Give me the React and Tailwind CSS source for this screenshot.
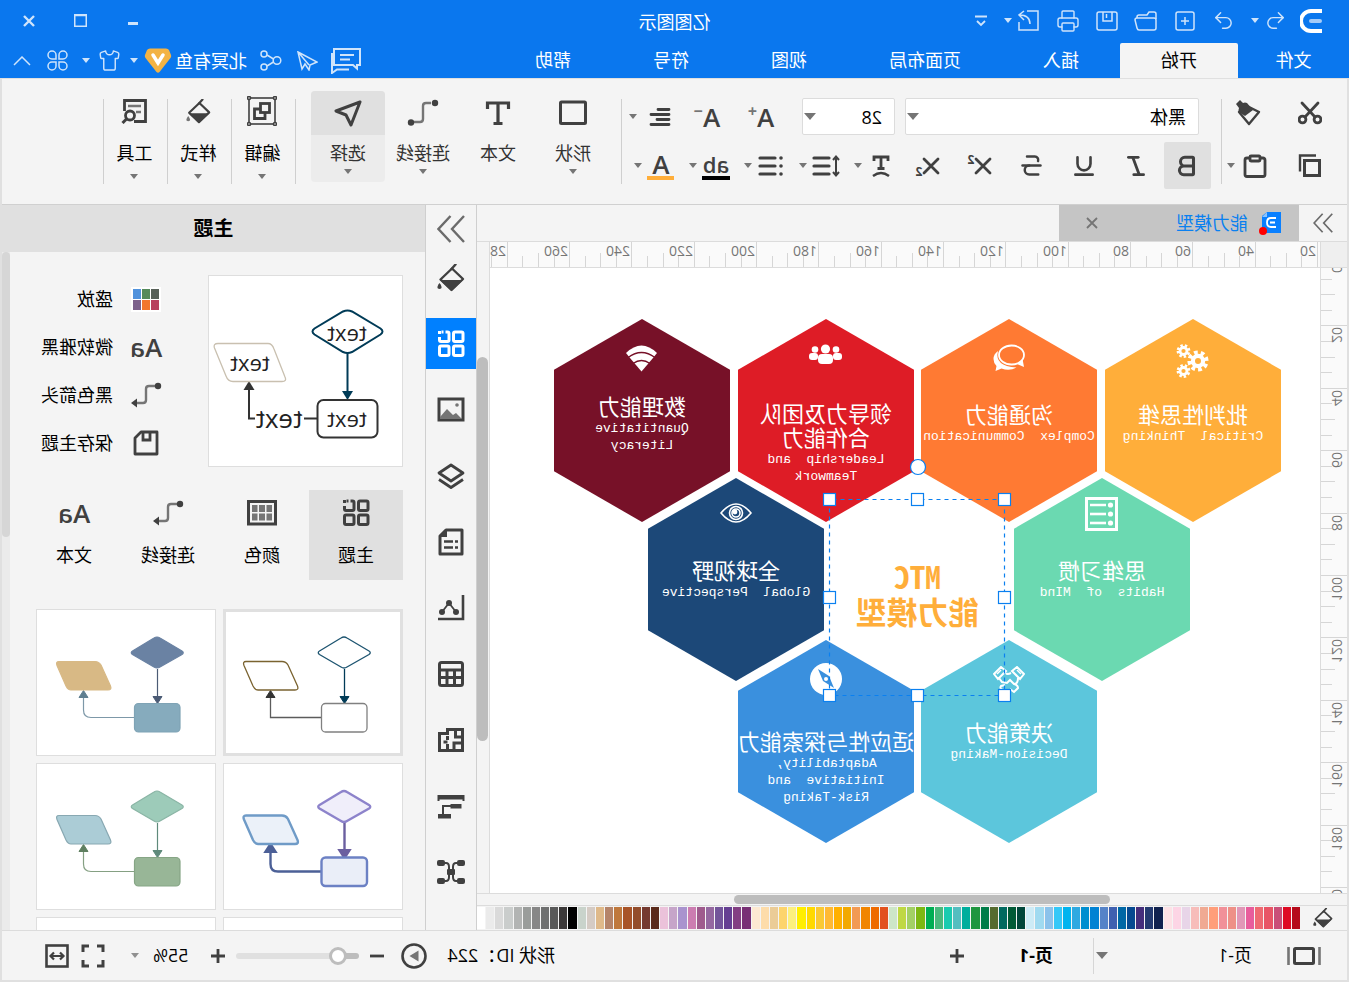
import { useState } from 'react'
import { Bold, Italic, Underline, Strikethrough, Undo2, Redo2, Printer, Shirt } from 'lucide-react'

const SWATCHES = [
  '#b50a1b', '#de0a24', '#c94f78', '#e85566', '#ef6a72', '#e85d9c', '#e197b7', '#ee9087', '#f19099', '#ff9e7a',
  '#f0aa93', '#f7bdba', '#e8d5e8', '#fdd5e5', '#fde2e6', '#11224f', '#243a70', '#452e7c', '#064990', '#0067a5',
  '#3f60b0', '#5583c8', '#0082d3', '#008ecf', '#2fa9e1', '#00b4ef', '#35c8f8', '#8bc2eb', '#a0daf0', '#cdebf6',
  '#00463a', '#005a36', '#00695f', '#556b2f', '#007c48', '#1f9640', '#00ae9d', '#54bec0', '#1acbb0', '#49b97d',
  '#00ae54', '#7db813', '#a3d065', '#bfd844', '#cde6c8', '#e2511f', '#ee6a00', '#f18500', '#f29a54', '#f2a900',
  '#ffb000', '#ffb934', '#fac933', '#ffd900', '#ffee00', '#fcf07e', '#fdd46c', '#ebcc97', '#fddcaa', '#fde9d2',
  '#783075', '#833f83', '#653f92', '#73559a', '#9568a0', '#9f5b8d', '#cc7db1', '#a993ce', '#c6a5c9', '#ebc2da',
  '#5a2a1a', '#753a30', '#934d2b', '#a85428', '#bf783d', '#b5846a', '#dfb98a', '#d5cbc4', '#c9d3cb', '#000000',
  '#3b3838', '#595959', '#6f7070', '#878787', '#9a9d9b', '#b2b4b3', '#cacdcc', '#dadada', '#ebebeb', '#ffffff',
]

const DARK = '#404040'

// ── Small shared bits ─────────────────────────────────────────────────────────
function Caret({ className = 'text-[#757575]', big }) {
  return (
    <svg width={big ? 12 : 8} height={big ? 7 : 5} viewBox="0 0 8 5" preserveAspectRatio="none" className={`shrink-0 ${className}`}>
      <path d="M0 0h8L4 5z" fill="currentColor" />
    </svg>
  )
}

function Ico({ w = 28, h = 28, box, children, sw = 2.4, color = DARK }) {
  return (
    <svg width={w} height={h} viewBox={box || `0 0 ${w} ${h}`} fill="none" stroke={color} strokeWidth={sw} className="shrink-0">
      {children}
    </svg>
  )
}

function IconButton({ label, className = 'w-6', children }) {
  return (
    <button aria-label={label} className={`flex h-6 shrink-0 items-center justify-center ${className}`}>
      {children}
    </button>
  )
}

// ── Icons ─────────────────────────────────────────────────────────────────────
function Bucket({ size = 28, drop = DARK }) {
  return (
    <Ico w={size} h={size} box="0 0 28 28">
      <path d="M9.5 0.5l4 4.5" strokeLinecap="round" />
      <path d="M13 4.5 24.5 15.5 13.5 26 2 15z" strokeLinejoin="round" />
      <path d="M2 16h23L13.5 27z" fill={DARK} stroke="none" />
      <path d="M25.5 19c3 4 2.5 6 0 6s-3-2 0-6z" fill={drop} stroke="none" />
    </Ico>
  )
}

function GridFour({ color = DARK, size = 28 }) {
  return (
    <Ico w={size} h={size} box="0 0 28 28" color={color} sw={3}>
      <rect x="2" y="2" width="9.5" height="9.5" rx="1.5" />
      <rect x="2" y="16" width="9.5" height="9.5" rx="1.5" />
      <rect x="16" y="16" width="9.5" height="9.5" rx="1.5" />
      <path d="M19.5 2h-2q-1.500 0-1.500 1.500V10q0 1.500 1.500 1.500H24q1.500 0 1.500-1.500V7M21.5 2h2M25.5 1v3" />
    </Ico>
  )
}

function Connector({ arrow }) {
  return (
    <Ico w={32} h={28} color="#757575" sw={2.4}>
      <path d={arrow ? 'M7 5h6q3 0 3 3v11q0 3 3 3h6' : 'M8 4h5q3 0 3 3v13q0 3 3 3h6'} />
      <circle cx="4" cy={arrow ? 5 : 4} r="3.200" fill={DARK} stroke="none" />
      {arrow
        ? <path d="M25 17.5v9l6-4.500z" fill={DARK} stroke="none" />
        : <circle cx="28" cy="23.500" r="3.200" fill={DARK} stroke="none" />}
    </Ico>
  )
}

function Chevrons({ w = 20, h = 20 }) {
  return (
    <Ico w={w} h={h} box="0 0 28 28" color="#6b6b6b" sw={2.4}>
      <path d="M1 1l12 13L1 27M14.5 1l12 13-12 13" />
    </Ico>
  )
}

function Lines({ bullets, spacing, x = 0 }) {
  return (
    <Ico w={28} h={24} sw={3.2}>
      {spacing && <path d="M4 3v18M1 6l3-3.5L7 6M1 18l3 3.500L7 18" strokeWidth="2" />}
      {bullets && [4, 12, 20].map(y => <circle key={y} cx="4" cy={y} r="1.800" fill={DARK} stroke="none" />)}
      <path d={`M${x} 4h15M${x} 12h15M${x} 20h15`} strokeLinecap="round" />
    </Ico>
  )
}

const RAIL = [
  ['填充', <Bucket />],
  ['主题', <GridFour color="#ffffff" />],
  ['图片', (
    <Ico>
      <rect x="2" y="3" width="24" height="21" strokeWidth="3" />
      <path d="M3 23l6-6 3 2 6-6 7 8v2z" fill="#757575" stroke="none" />
      <circle cx="19" cy="9" r="0" />
      <circle cx="8" cy="9" r="1.800" fill="#757575" stroke="none" />
    </Ico>
  )],
  ['图层', (
    <Ico sw={2.8}>
      <path d="M14 3 26 11 14 19 2 11z" strokeLinejoin="round" />
      <path d="M2 17.5 14 25.5 26 17.5" strokeLinejoin="round" />
    </Ico>
  )],
  ['文档', (
    <Ico sw={3}>
      <path d="M3 2h16l6 6v18H3z" strokeLinejoin="round" />
      <path d="M18 2v7h7z" fill={DARK} stroke="none" />
      <path d="M7 13.5h3M12 13.5h9M7 19.5h3M12 19.5h9" strokeWidth="2.400" />
    </Ico>
  )],
  ['图表', (
    <Ico sw={2.6}>
      <path d="M2 1v24h25" />
      <path d="M9 18l7-9 7 9" strokeWidth="1.800" />
      <g fill={DARK} stroke="none">
        <circle cx="9" cy="18" r="3" /><circle cx="16" cy="9" r="3" /><circle cx="23" cy="18" r="3" />
      </g>
    </Ico>
  )],
  ['表格', (
    <Ico sw={3}>
      <rect x="2.500" y="2.500" width="23" height="23" rx="2" />
      <path d="M2.5 10h23M2.5 17.5h23M10.5 10v15M18 10v15" />
    </Ico>
  )],
  ['平面图', (
    <Ico sw={3}>
      <path d="M2.5 3.5h15v4h8v17h-23z" />
      <path d="M2.5 11h7v-7.500M2.5 17h8.500v7.500M17.5 10v4M17.5 18v7M17.5 16h4" strokeWidth="3" />
    </Ico>
  )],
  ['甘特图', (
    <Ico>
      <path d="M.5 3h27v6h-2V7.500h-23V9h-2z" fill={DARK} stroke="none" />
      <path d="M3.5 12h11v4.500h-11zM14 22h13v4.500H14z" fill={DARK} stroke="none" />
      <path d="M14 14h8v9" strokeWidth="2" />
    </Ico>
  )],
  ['思维导图', (
    <Ico sw={2}>
      <path d="M7 5h2q3 0 3 4v10q0 4-3 4H7M21 5h-2q-3 0-3 4v10q0 4 3 4h2" />
      <g fill={DARK} stroke="none">
        <rect x="0" y="2" width="8" height="6" rx="2" /><rect x="20" y="2" width="8" height="6" rx="2" />
        <rect x="0" y="20" width="8" height="6" rx="2" /><rect x="20" y="20" width="8" height="6" rx="2" />
        <rect x="10" y="11" width="8" height="6" rx="1" />
      </g>
    </Ico>
  )],
]

// ── Title bar ─────────────────────────────────────────────────────────────────
const MENU = ['插入', '页面布局', '视图', '符号', '帮助']

function TitleBar() {
  return (
    <header className="bg-[#0a77ee] text-[#cfe4fb]">
      <div className="grid h-[43px] grid-cols-[1fr_auto_1fr] items-center pb-[2px]">
        <div className="flex items-center gap-[15px] pl-[27px]">
          <span className="flex items-center gap-3">
            <svg width="22" height="24" viewBox="0 0 22 24" fill="none" strokeWidth="4">
              <path d="M1 2h10a10 10 0 0 1 0 20H1" stroke="#fff" strokeLinecap="square" />
              <path d="M2 12h9" stroke="#a5cbf8" strokeLinecap="round" />
            </svg>
            <span className="flex items-center gap-[5px]">
              <IconButton label="撤销"><Undo2 size={23} strokeWidth={1.5} /></IconButton>
              <Caret className="text-[#cfe4fb]" />
            </span>
          </span>
          <IconButton label="重做"><Redo2 size={23} strokeWidth={1.5} /></IconButton>
          <IconButton label="新建">
            <Ico w={20} h={20} color="currentColor" sw={1.5}><rect x="1" y="1" width="18" height="18" rx="2" /><path d="M10 6v8M6 10h8" /></Ico>
          </IconButton>
          <IconButton label="打开">
            <Ico w={23} h={20} color="currentColor" sw={1.5}>
              <path d="M1 8V3q0-2 2-2h5l2 3h8q2 0 2 2v1" /><path d="M1 9q0-2 2-2h17q2 0 2 2l-2 8q-.5 2-2 2H3q-2 0-2-2z" />
            </Ico>
          </IconButton>
          <IconButton label="保存">
            <Ico w={22} h={20} color="currentColor" sw={1.5}><rect x="1" y="1" width="20" height="18" rx="2" /><path d="M6 1v9h9V1M11.5 3v4" /></Ico>
          </IconButton>
          <IconButton label="打印"><Printer size={26} strokeWidth={1.4} /></IconButton>
          <span className="flex items-center gap-[5px]">
            <IconButton label="导出">
              <Ico w={21} h={21} color="currentColor" sw={1.5}><path d="M12 1H1v19h19v-8M9 14q0-9 11-9M15 1l5 4-5 5" /></Ico>
            </IconButton>
            <Caret className="text-[#cfe4fb]" />
          </span>
          <IconButton label="更多" className="w-4">
            <Ico w={12} h={12} color="currentColor" sw={1.8}><path d="M0 1.5h12M2 6l4 4 4-4" /></Ico>
          </IconButton>
        </div>
        <h1 className="pt-[3px] text-[18px] leading-6 text-white">亿图图示</h1>
        <div className="flex items-center justify-end gap-7 pr-[17px]">
          <IconButton label="最小化"><Ico w={10} h={10} color="currentColor" sw={3}><path d="M0 7.5h10" /></Ico></IconButton>
          <IconButton label="最大化"><Ico w={13} h={13} color="currentColor" sw={1.5}><rect x=".75" y=".75" width="11.500" height="11.500" /><path d="M0 1.5h13" /></Ico></IconButton>
          <IconButton label="关闭"><Ico w={12} h={12} color="currentColor" sw={2.4}><path d="M1 1l10 10M11 1 1 11" /></Ico></IconButton>
        </div>
      </div>

      <div className="flex h-[35px] justify-between">
        <nav className="flex text-[18px] leading-[35px] text-white">
          <button className="w-[111px]">文件</button>
          <button className="rounded-t-xs bg-[#f4f4f4] px-[41px] text-black">开始</button>
          {MENU.map(m => <button key={m} className="px-[41px]">{m}</button>)}
        </nav>
        <div className="flex items-center gap-3 pr-[10px]">
          <IconButton label="评论" className="w-[30px]">
            <Ico w={30} h={26} color="currentColor" sw={2}>
              <path d="M27 6h2v19l-5-3.500H12M1 1h26v16H8l-4 3.500V17H1z" />
              <path d="M7 7h14M11 11.500h10" />
            </Ico>
          </IconButton>
          <IconButton label="发送">
            <Ico w={22} h={20} color="currentColor" sw={1.5}><path d="M20 1 1 11l7 3 1 5 4-6 3 5z M20 1 9 14" /></Ico>
          </IconButton>
          <IconButton label="分享">
            <Ico w={22} h={21} color="currentColor" sw={1.5}>
              <circle cx="5" cy="10.500" r="3.800" /><circle cx="18" cy="4" r="3" /><circle cx="18" cy="17" r="3" />
              <path d="M8.5 9 15 5M8.5 12l6.500 4" />
            </Ico>
          </IconButton>
          <button className="flex items-center gap-[3px] text-[18px] leading-6 text-white">
            北冥有鱼
            <svg width="28" height="25" viewBox="0 0 28 25">
              <path d="M6 .5h16q2 0 3 1.500l2 5q.5 1.500-.5 3L15.5 24q-1.500 1.500-3 0L1.500 10q-1-1.500-.5-3l2-5Q4 .5 6 .5z" fill="#f3b344" />
              <path d="M9 7l5 8 5-8" fill="none" stroke="#fff" strokeWidth="3.500" strokeLinecap="round" />
            </svg>
          </button>
          <span className="-ml-[6px] flex items-center gap-2">
            <Caret className="text-[#cfe4fb]" />
            <IconButton label="皮肤"><Shirt size={23} strokeWidth={1.5} /></IconButton>
            <Caret className="text-[#cfe4fb]" />
          </span>
          <IconButton label="应用">
            <Ico w={21} h={21} color="currentColor" sw={1.5}>
              <path d="M9 9V5a4 4 0 1 0-4 4zM12 9V5a4 4 0 1 1 4 4zM9 12v4a4 4 0 1 1-4-4zM12 12v4a4 4 0 1 0 4-4z" />
            </Ico>
          </IconButton>
          <IconButton label="收起">
            <Ico w={18} h={10} color="currentColor" sw={1.5}><path d="M1 9l8-8 8 8" /></Ico>
          </IconButton>
        </div>
      </div>
    </header>
  )
}

// ── Ribbon ────────────────────────────────────────────────────────────────────
function Divider() {
  return <div className="mt-5 h-[85px] w-px shrink-0 bg-[#cfcfcf]" />
}

function Split({ label, children }) {
  return (
    <button aria-label={label} className="flex shrink-0 items-center gap-[3px]">
      <span className="flex w-8 items-center justify-center">{children}</span>
      <Caret />
    </button>
  )
}

function Fmt({ label, children }) {
  return <button aria-label={label} className="flex w-8 shrink-0 items-center justify-center">{children}</button>
}

function Tool({ label, icon, active, caret = true }) {
  return (
    <button className={`mt-3 flex h-[91px] w-[74px] shrink-0 flex-col items-center rounded-sm ${active ? 'bg-[#ececec]' : ''}`}>
      <span className={`flex h-11 w-full items-center justify-center rounded-t-sm ${active ? 'bg-[#e0e0e0]' : ''}`}>{icon}</span>
      <span className="mt-1 text-[18px] leading-7 text-[#333]">{label}</span>
      {caret && <span className="pt-[2px]"><Caret /></span>}
    </button>
  )
}

function Small({ label, icon }) {
  return (
    <>
      <button className="mt-3 flex h-[91px] w-[63px] shrink-0 flex-col items-center pl-[2px]">
        <span className="flex h-10 items-center justify-center">{icon}</span>
        <span className="mt-2 text-[18px] leading-7 text-black">{label}</span>
        <span className="pt-[7px]"><Caret /></span>
      </button>
      <Divider />
    </>
  )
}

const FIELD = 'h-[37px] appearance-none rounded-xs border border-[#dcdcdc] bg-white px-3 text-[18px] leading-7 text-black'

function Ribbon() {
  return (
    <section className="flex h-[126px] shrink-0 border-b border-[#d0d0d0]">
      <div className="flex w-[125px] shrink-0 flex-col gap-[6px] pt-[10px] pl-[17px]">
        <div className="flex h-[47px] gap-[21px]">
          <button aria-label="剪切" className="flex w-10 items-center justify-center">
            <Ico w={24} h={24} sw={2.8}>
              <circle cx="4.500" cy="18.500" r="3.400" /><circle cx="19.500" cy="18.500" r="3.400" />
              <path d="M7 16 20 2M17 16 4 2" strokeLinecap="round" />
            </Ico>
          </button>
          <button aria-label="格式刷" className="flex w-10 items-center justify-center">
            <Ico w={26} h={26}>
              <path d="M3 12l12-6 8 6-10 12z" strokeLinejoin="round" />
              <path d="M9 10 15 3q2-1 4 0l3-3 4 4-3 4q1 2 0 4L17 16z" fill={DARK} stroke="none" />
            </Ico>
          </button>
        </div>
        <div className="flex h-[47px] gap-[15px]">
          <button aria-label="复制" className="flex w-10 items-center justify-center">
            <Ico w={24} h={24} sw={3}><path d="M2.5 6.500h15v15h-15z" /><path d="M6 1.500h16v16" strokeWidth="2.400" /></Ico>
          </button>
          <button aria-label="粘贴" className="flex items-center">
            <span className="flex w-10 justify-center">
              <Ico w={24} h={24} sw={2.8}><rect x="2" y="4" width="20" height="18.500" rx="2" /><rect x="7" y="2" width="10" height="5" rx="1" fill="#f4f4f4" /></Ico>
            </span>
            <Caret />
          </button>
        </div>
      </div>
      <Divider />

      <div className="flex w-[599px] shrink-0 flex-col gap-[6px] pt-[10px] pl-[10px]">
        <div className="flex h-[47px] items-center pt-2 pl-3">
          <label className="relative flex items-center">
            <span className="sr-only">字体</span>
            <select className={`w-[294px] ${FIELD}`}>
              <option>黑体</option>
            </select>
            <span className="pointer-events-none absolute right-[2px]"><Caret big /></span>
          </label>
          <label className="relative ml-[10px] flex items-center">
            <span className="sr-only">字号</span>
            <select className={`w-[93px] ${FIELD}`}>
              <option>28</option>
            </select>
            <span className="pointer-events-none absolute right-[2px]"><Caret big /></span>
          </label>
          <div className="ml-[23px] flex items-center gap-[18px]">
            <button aria-label="增大字号" className="flex w-9 items-start justify-center text-[26px] leading-8 font-semibold text-[#404040]">
              A<span className="text-[16px] leading-5 font-bold text-[#757575]">+</span>
            </button>
            <button aria-label="减小字号" className="flex w-9 items-start justify-center text-[26px] leading-8 font-semibold text-[#404040]">
              A<span className="text-[16px] leading-5 font-bold text-[#757575]">−</span>
            </button>
            <button aria-label="对齐" className="flex items-center gap-[10px]">
              <Ico w={24} h={20} sw={2.8}><path d="M2 2.5h11M2 7.5h18M2 12.5h12M2 17.5h18" strokeLinecap="round" /></Ico>
              <Caret />
            </button>
          </div>
        </div>

        <div className="flex h-[47px] items-stretch">
          <button aria-label="加粗" className="flex w-[47px] items-center justify-center rounded-xs bg-[#e0e0e0]"><Bold size={26} color={DARK} strokeWidth={2.8} /></button>
          <div className="ml-3 flex gap-5">
            <Fmt label="斜体"><Italic size={26} color={DARK} strokeWidth={2.6} /></Fmt>
            <Fmt label="下划线"><Underline size={26} color={DARK} strokeWidth={2.4} /></Fmt>
            <Fmt label="删除线"><Strikethrough size={27} color={DARK} strokeWidth={2.2} /></Fmt>
            <Fmt label="上标">
              <Ico w={18} h={18} sw={2.8}><path d="M2 2l14 14M16 2 2 16" strokeLinecap="round" /></Ico>
              <span className="self-start pt-[10px] text-[12px] leading-4 font-bold text-[#404040]">2</span>
            </Fmt>
            <Fmt label="下标">
              <Ico w={18} h={18} sw={2.8}><path d="M2 2l14 14M16 2 2 16" strokeLinecap="round" /></Ico>
              <span className="self-end pb-[9px] text-[12px] leading-4 font-bold text-[#404040]">2</span>
            </Fmt>
          </div>
          <div className="ml-[15px] flex gap-3">
            <Split label="文字效果">
              <Ico w={20} h={24} sw={2.8}><path d="M3 7V3h14v4M10 3v11M6.5 14.500h7" /><path d="M2 22q8-6 16 0" strokeWidth="2.400" /></Ico>
            </Split>
            <Split label="行距"><Lines spacing x={11} /></Split>
            <Split label="项目符号"><Lines bullets x={10} /></Split>
            <Split label="突出显示">
              <span className="border-b-4 border-black px-px text-[22px] leading-6 font-semibold text-[#404040]">ab</span>
            </Split>
            <Split label="字体颜色">
              <span className="w-[27px] border-b-4 border-[#ffae3a] text-center text-[26px] leading-6 font-semibold text-[#404040]">A</span>
            </Split>
          </div>
        </div>
      </div>
      <Divider />

      <div className="flex gap-px pr-[15px] pl-[11px]">
        <Tool label="形状" icon={<Ico w={28} h={26} sw={3}><rect x="1.500" y="2" width="25" height="21.500" rx="1" /></Ico>} />
        <Tool label="文本" caret={false} icon={<Ico w={26} h={26} sw={3.2}><path d="M2.5 9V3h21v6M13 3v20M8.5 23.500h9" /></Ico>} />
        <Tool label="连接线" icon={<Connector />} />
        <Tool label="选择" active icon={<Ico w={28} h={28} sw={3}><path d="M2 3l24 9-10 4-5 10z" strokeLinejoin="round" /></Ico>} />
      </div>
      <Divider />
      <Small label="编辑" icon={(
        <Ico w={30} h={30} sw={1.6}>
          <rect x="2" y="2" width="26" height="26" />
          {[[2, 2], [28, 2], [2, 28], [28, 28]].map(([x, y]) => <circle key={`${x}-${y}`} cx={x} cy={y} r="1.500" fill="#fff" />)}
          <rect x="7.500" y="7.500" width="9" height="9" strokeWidth="2.800" />
          <path d="M12 17v5.500h10.500V13h-6" strokeWidth="2.800" />
        </Ico>
      )} />
      <Small label="样式" icon={<Bucket size={25} drop="#757575" />} />
      <Small label="工具" icon={(
        <Ico w={28} h={26} sw={2.8}>
          <path d="M14 23.500H2.500v-21h21V13" />
          <path d="M7 8h13M7 14h5" stroke="#757575" strokeWidth="2.400" />
          <circle cx="18" cy="17.500" r="4.500" /><path d="M21.5 21l4 4" strokeWidth="3" />
        </Ico>
      )} />
    </section>
  )
}

// ── Canvas ────────────────────────────────────────────────────────────────────
function Gear({ x, y, r, s }) {
  const step = (2 * Math.PI * r) / 16
  return (
    <g fill="none" stroke="#fff">
      <circle cx={x} cy={y} r={r - s + 0.8} strokeWidth={s} />
      <circle cx={x} cy={y} r={r} strokeWidth={s} strokeDasharray={`${step * 1.1} ${step * 0.9}`} />
    </g>
  )
}

const NODES = [
  {
    id: 'critical', x: 39, y: 51, color: '#ffae3a', title: ['批判性思维'], sub: ['Critical  Thinking'], textTop: 83, iconTop: 25,
    icon: <svg width="34" height="34"><Gear x={12} y={17} r={8.5} s={4.2} /><Gear x={26.5} y={7} r={5.5} s={2.8} /><Gear x={26.5} y={27} r={5.5} s={2.8} /></svg>,
  },
  {
    id: 'communication', x: 223, y: 51, color: '#ff7a33', title: ['沟通能力'], sub: ['Complex  Communication'], textTop: 83, iconTop: 25,
    icon: (
      <svg width="32" height="28">
        <path d="M31.5 15q0 4-3 7l1 5-6-2.500q-8 3-15-1Q31 22 27 7q4.500 3 4.500 8z" fill="#fff" />
        <ellipse cx="13.500" cy="11" rx="12.500" ry="9.500" fill="none" stroke="#fff" strokeWidth="1.800" />
        <path d="M2.5 15l-1.500 8 7-3z" fill="#fff" />
      </svg>
    ),
  },
  {
    id: 'teamwork', x: 406, y: 51, color: '#de1c26', title: ['领导力及团队', '合作能力'], sub: ['Leadership  and', 'Teamwork'], textTop: 82, iconTop: 25,
    icon: (
      <svg width="33" height="21" fill="#fff">
        <circle cx="16.500" cy="5" r="4.600" /><circle cx="6" cy="5.500" r="3.300" /><circle cx="27" cy="5.500" r="3.300" />
        <rect x="9" y="10" width="15" height="10" rx="4" /><rect x="0" y="9" width="9" height="7" rx="3" /><rect x="24" y="9" width="9" height="7" rx="3" />
      </svg>
    ),
  },
  {
    id: 'literacy', x: 590, y: 51, color: '#771128', title: ['数理能力'], sub: ['Quantitative', 'Literacy'], textTop: 75, iconTop: 26,
    icon: (
      <svg width="31" height="27">
        <path d="M15.5 26.500 4 13 0 8Q15.5-7 31 8l-4 5z" fill="#fff" />
        <path d="M2 12.500q13.500-10 27 0M7 18.500q8.500-6 17 0" fill="none" stroke="#771128" strokeWidth="1.500" />
      </svg>
    ),
  },
  {
    id: 'habits', x: 130, y: 210, color: '#6bd9b1', title: ['思维习惯'], sub: ['Habits  of  MInd'], textTop: 80, iconTop: 19,
    icon: (
      <svg width="33" height="34" fill="none" stroke="#fff">
        <rect x="1.500" y="1.500" width="30" height="31" strokeWidth="3" />
        {[8, 17, 26].map(y => <g key={y}><circle cx="7.500" cy={y} r="2.600" fill="#fff" stroke="none" /><path d={`M12 ${y}h16`} strokeWidth="2.600" /></g>)}
      </svg>
    ),
  },
  {
    id: 'global', x: 496, y: 210, color: '#1c4878', title: ['全球视野'], sub: ['Global  Perspective'], textTop: 80, iconTop: 25,
    icon: (
      <svg width="32" height="20" fill="none" stroke="#fff" strokeWidth="1.600">
        <path d="M1 10Q16-8 31 10 16 28 1 10z" /><circle cx="16" cy="10" r="6.500" /><circle cx="16" cy="10" r="4" /><circle cx="17" cy="9" r="1.600" fill="#fff" />
      </svg>
    ),
  },
  {
    id: 'decision', x: 223, y: 372, color: '#5cc6dc', title: ['决策能力'], sub: ['Decision-Making'], textTop: 80, iconTop: 26,
    icon: (
      <svg width="32" height="28" fill="none" stroke="#fff" strokeWidth="2">
        <path d="M1 8 8 1l5 4-8 8zM31 8 24 1l-5 4 8 8z" /><path d="M4 8l4-4M28 8l-4-4" strokeWidth="1.500" />
        <path d="M7 12q0 6 4 6l4-4 3 3 5-1 3-4M14 7q4 2 5 0M11 18q-4 1-4 4l4 4 4-3M20 19l4 1q2 3-3 4" />
      </svg>
    ),
  },
  {
    id: 'adaptability', x: 406, y: 372, color: '#3a90de', title: ['适应性与探索能力'], sub: ['Adaptability,', 'Initiative  and', 'Risk-Taking'], textTop: 89, iconTop: 22,
    icon: (
      <svg width="32" height="34">
        <circle cx="16" cy="17" r="16" fill="#fff" />
        <path d="M24 7 19 19 8 26l5-12z" fill="#3a90de" /><circle cx="16" cy="17" r="2" fill="#fff" />
      </svg>
    ),
  },
]

function Hexagon({ node }) {
  return (
    <div
      className="absolute h-[203px] w-[176px] [clip-path:polygon(50%_0,100%_25%,100%_75%,50%_100%,0_75%,0_25%)]"
      style={{ left: node.x, top: node.y, background: node.color }}
    >
      <div className="absolute inset-x-0 flex justify-center" style={{ top: node.iconTop }}>{node.icon}</div>
      <div className="absolute inset-x-0 flex flex-col items-center gap-[2px] whitespace-pre text-white" style={{ top: node.textTop }}>
        <div className="text-center text-[22px] leading-6">
          {node.title.map(t => <div key={t}>{t}</div>)}
        </div>
        <div className="text-center font-['Liberation_Mono',monospace] text-[13px] leading-[17px]">
          {node.sub.map(t => <div key={t}>{t}</div>)}
        </div>
      </div>
    </div>
  )
}

const HANDLES = [[315, 231], [402, 231], [490, 231], [315, 329], [490, 329], [315, 427], [402, 427], [490, 427]]

function Drawing() {
  return (
    <div className="relative min-w-0 flex-1 overflow-hidden bg-white">
      {NODES.map(n => <Hexagon key={n.id} node={n} />)}
      <div className="absolute top-[290px] left-[315px] w-[175px] text-center font-bold text-[#ffae3a]">
        <div className="font-['Noto_Sans_Mono_CJK_SC','Liberation_Mono',monospace] text-[31px] leading-9">MTC</div>
        <div className="text-[31px] leading-9">能力模型</div>
      </div>
      <svg width="900" height="625" className="pointer-events-none absolute top-0 left-0" fill="#fff" stroke="#0a80f0" strokeWidth="1.200">
        <rect x="315.500" y="231.500" width="175" height="196" fill="none" strokeDasharray="4 4" />
        {HANDLES.map(([x, y]) => <rect key={`${x}-${y}`} x={x - 5.5} y={y - 5.5} width="12" height="12" />)}
        <circle cx="402" cy="199" r="7.500" />
      </svg>
    </div>
  )
}

const TICK = 15.58

function RulerTop() {
  const ticks = Array.from({ length: 54 }, (_, i) => i)
  return (
    <svg height="25" className="block w-full min-w-0 flex-1 bg-[#fafafa] text-[14px]" stroke="#d6d6d6">
      {ticks.map(i => {
        const x = Math.round(2 + i * TICK) + 0.5
        const top = i % 4 === 0 ? 0 : i % 4 === 2 ? 11 : 14
        return <path key={i} d={`M${x} ${top}V25`} />
      })}
      {ticks.filter(i => i % 4 === 0).map(i => (
        <text key={i} x={Math.round(2 + i * TICK) + 2} y="14" fill="#757575" stroke="none">{20 + i * 5}</text>
      ))}
    </svg>
  )
}

function RulerSide() {
  const ticks = Array.from({ length: 41 }, (_, i) => i)
  return (
    <svg width="26" className="block h-full text-[14px]" stroke="#d6d6d6">
      {ticks.map(i => {
        const y = Math.round(-5 + i * 15.6) + 0.5
        const left = i % 4 === 0 ? 0 : i % 4 === 2 ? 12 : 15
        return <path key={i} d={`M${left} ${y}H26`} />
      })}
      {ticks.filter(i => i % 4 === 0).map(i => (
        <text key={i} textAnchor="end" transform={`translate(15 ${Math.round(-5 + i * 15.6) + 2}) rotate(-90)`} fill="#757575" stroke="none">{i * 5}</text>
      ))}
    </svg>
  )
}

function Workspace() {
  return (
    <main className="flex min-w-0 flex-1 flex-col">
      <div className="flex h-[37px] shrink-0 border-b border-[#dcdcdc]">
        <button aria-label="展开" className="flex w-12 items-center justify-center"><Chevrons /></button>
        <div className="flex w-60 items-center bg-[#c5c5c5] pl-[18px]">
          <svg width="22" height="24" viewBox="0 0 22 24" className="shrink-0">
            <path d="M0 1h14l5 4v17H0z" fill="#0a80ff" />
            <path d="M14 1v5h5z" fill="#8cc4ff" />
            <path d="M5 7h5q4 0 4 4.500T10 16H5M6 11.500h5" fill="none" stroke="#fff" strokeWidth="1.800" />
            <circle cx="18" cy="20" r="4" fill="#f00" />
          </svg>
          <button className="ml-[11px] text-[18px] text-[#0a80f0]">能力模型</button>
          <button aria-label="关闭标签" className="ml-auto pr-[27px]">
            <Ico w={12} h={12} color="#757575" sw={1.8}><path d="M1 1l10 10M11 1 1 11" /></Ico>
          </button>
        </div>
      </div>

      <div className="flex min-h-0 flex-1">
        <div className="flex min-w-0 flex-1 flex-col">
          <div className="flex h-[26px] shrink-0 border-b border-[#dcdcdc]">
            <div className="w-[27px] shrink-0 border-r border-[#dcdcdc] bg-[#efefef]" />
            <RulerTop />
          </div>
          <div className="flex min-h-0 flex-1">
            <div className="w-[27px] shrink-0 overflow-hidden border-r border-[#dcdcdc] bg-[#fafafa]"><RulerSide /></div>
            <Drawing />
          </div>
        </div>
        <div className="w-[13px] shrink-0 border-l border-[#dcdcdc] pt-[115px] pl-px">
          <div className="h-[384px] rounded-md bg-[#bdbdbd]" />
        </div>
      </div>

      <div className="h-[13px] shrink-0 border-y border-[#dcdcdc] pt-px pl-[237px]">
        <div className="h-[9px] w-[376px] rounded-full bg-[#bdbdbd]" />
      </div>
      <div className="flex h-[24px] shrink-0">
        <button aria-label="填充颜色" className="flex w-[47px] shrink-0 items-center justify-center"><Bucket size={20} /></button>
        <div className="flex flex-1 gap-px py-px">
          {SWATCHES.map(c => <button key={c} aria-label={c} className="flex-1" style={{ background: c }} />)}
        </div>
      </div>
    </main>
  )
}

// ── Right rail + theme panel ──────────────────────────────────────────────────
function Rail() {
  return (
    <aside className="flex w-[52px] shrink-0 flex-col items-center border-x border-[#cfcfcf]">
      <button aria-label="收起面板" className="flex h-[47px] items-center justify-center"><Chevrons w={28} h={28} /></button>
      <div className="flex w-full flex-col gap-[15px]">
        {RAIL.map(([label, icon]) => (
          <button key={label} aria-label={label} className={`flex h-[51px] w-full items-center justify-center ${label === '主题' ? 'bg-[#0080ff]' : ''}`}>
            {icon}
          </button>
        ))}
      </div>
    </aside>
  )
}

const THEMES = [
  { d: ['none', '#1d5470'], p: ['none', '#7a6330'], r: ['none', '#808080'], a: '#003b57', b: '#5c5c5c', tip: '#333333', w: 1.3, square: true },
  { d: ['#6a82a3', '#6a82a3'], p: ['#d8b985', '#d8b985'], r: ['#86abbd', '#7fa3b5'], a: '#4b5b75', b: '#7d98a8', tip: '#5f7f90', w: 1.2 },
  { d: ['#f0eefa', '#8d83cb'], p: ['#ebf1f9', '#6f9bc7'], r: ['#eaeef8', '#6c81c4'], a: '#6b5fa0', b: '#4c6097', tip: '#4c6097', w: 2.4, tips: 3 },
  { d: ['#9dcbb9', '#8ab5a5'], p: ['#abccd6', '#88a8b2'], r: ['#98b697', '#86a585'], a: '#5f8a7b', b: '#85a083', tip: '#5f7f60', w: 1.2 },
  null,
  null,
]

function Thumb({ t, active }) {
  return (
    <button aria-label="主题样式" className={`relative h-[147px] w-[180px] bg-white ${active ? 'border-3 border-[#e0e0e0]' : 'border border-[#dedede]'}`}>
      {t && (
        <svg width="180" height="147" className={`absolute ${active ? '-top-[3px] -left-[3px]' : '-top-px -left-px'}`} fill="none" strokeWidth={t.w}>
          <path d="M56 29q3-2 6 0L83.5 42q2.500 1.500 0 3.500L62 58q-3 2-6 0L34 45.500q-2.500-2 0-3.500z" fill={t.d[0]} stroke={t.d[1]} />
          <path d="M58.5 60v30" stroke={t.a} />
          <path d="M54 87.500l4.500 7 4.500-7z" fill={t.a} stroke={t.a} strokeWidth={t.tips || 1} />
          <path d={t.square ? 'M82 108.500h50.500V84' : 'M82 108.500h43q7.500 0 7.500-7.500V84'} stroke={t.b} />
          <path d="M128 88.500l4.500-7 4.500 7z" fill={t.tip} stroke={t.tip} strokeWidth={t.tips || 1} />
          <rect x="36" y="94.500" width="45.500" height="28.500" rx="4" fill={t.r[0]} stroke={t.r[1]} />
          <path d="M121 52.500h36q3.500 0 2 4L150 77q-2 4-5 4h-37q-4 0-2.500-4L115 56q2-3.500 6-3.500z" fill={t.p[0]} stroke={t.p[1]} />
        </svg>
      )}
    </button>
  )
}

function Preview() {
  return (
    <div className="h-[192px] w-[195px] shrink-0 border border-[#dedede] bg-white">
      <svg width="193" height="190" viewBox="1 1 193 190" fill="none" strokeWidth="2" className="text-[22px]">
        <path d="M51 36.500q4.500-2 9 0l28.500 17q4 3 0 6L60 77q-4.500 2-9 0L22.5 59.500q-4-3 0-6z" stroke="#003b57" />
        <path d="M55.5 78v40" stroke="#003b57" />
        <path d="M50 116l5.500 9 5.500-9z" fill="#003b57" />
        <rect x="25.500" y="125" width="60" height="37.500" rx="6" stroke="#333" />
        <path d="M86 143.500h13M148 143.500h6V112" stroke="#333" />
        <path d="M148.5 115l5.500-9 5.500 9z" fill="#333" />
        <path d="M135 68.500h50q5 0 3.500 4.500L177 101q-2 5.500-7 5.500h-49q-5 0-3-4.500L129 74q2-5.500 6-5.500z" stroke="#c9c0b0" strokeWidth="1.300" />
        <g fill="#222" textAnchor="middle">
          <text x="56" y="66">text</text>
          <text x="56" y="152">text</text>
          <text x="153" y="96">text</text>
          <text x="124" y="153" className="text-[26px]">text</text>
        </g>
      </svg>
    </div>
  )
}

const Aa = <span className="text-[26px] leading-7 font-semibold text-[#404040]">Aa</span>

const OPTIONS = [
  ['盛放', (
    <span className="grid grid-cols-3 gap-px bg-white p-[2px]">
      <span className="h-[10px] w-2 bg-[#576058]" /><span className="h-[10px] w-2 bg-[#558a5b]" /><span className="h-[10px] w-2 bg-[#5192dc]" />
      <span className="h-[10px] w-2 bg-[#b8425f]" /><span className="h-[10px] w-2 bg-[#f3762c]" /><span className="h-[10px] w-2 bg-[#7d628c]" />
    </span>
  )],
  ['微软雅黑', Aa],
  ['黑色箭头', <Connector arrow />],
  ['保存主题', <Ico w={26} h={26} sw={2.8}><path d="M2 2h16l6 6v16H2z" strokeLinejoin="round" /><path d="M9 2v8h7V2" /></Ico>],
]

const TABS = [
  ['主题', <GridFour />],
  ['颜色', (
    <Ico w={30} h={28} sw={3}>
      <rect x="1.500" y="2.500" width="27" height="22.500" />
      <path d="M5 6h5.500v7H5zM12 6h6v7h-6zM19.5 6H25v7h-5.500zM5 14.500h5.500v7H5zM12 14.500h6v7h-6zM19.5 14.500H25v7h-5.500z" fill="#757575" stroke="none" />
    </Ico>
  )],
  ['连接线', <Connector arrow />],
  ['文本', Aa],
]

function ThemePanel() {
  const [tab, setTab] = useState('主题')
  return (
    <aside className="flex w-[423px] shrink-0 flex-col">
      <h2 className="h-[47px] shrink-0 bg-[#e0e0e0] text-center text-[20px] leading-[47px] font-bold text-black">主题</h2>
      <div className="flex min-h-0 flex-1">
        <div className="min-w-0 flex-1 overflow-hidden pt-[23px] pl-[22px]">
          <div className="flex">
            <Preview />
            <ul className="ml-[42px] flex flex-col">
              {OPTIONS.map(([label, icon]) => (
                <li key={label}>
                  <button className="flex h-12 items-center gap-[13px] text-[18px] whitespace-nowrap text-black">
                    <span className="flex w-10 justify-center">{icon}</span>
                    {label}
                  </button>
                </li>
              ))}
            </ul>
          </div>
          <div className="mt-[23px] flex">
            {TABS.map(([label, icon]) => (
              <button
                key={label}
                onClick={() => setTab(label)}
                className={`flex h-[90px] w-[94px] shrink-0 flex-col items-center gap-3 pt-[9px] text-[18px] text-black ${tab === label ? 'bg-[#e0e0e0]' : ''}`}
              >
                <span className="flex h-7 items-center">{icon}</span>
                <span className="leading-8">{label}</span>
              </button>
            ))}
          </div>
          <div className="mt-[29px] flex flex-wrap gap-[7px]">
            {THEMES.map((t, i) => <Thumb key={i} t={t} active={i === 0} />)}
          </div>
        </div>
        <div className="w-2 shrink-0 bg-[#ebebeb]">
          <div className="h-[285px] rounded-sm bg-[#d6d6d6]" />
        </div>
      </div>
    </aside>
  )
}

// ── Status bar ────────────────────────────────────────────────────────────────
function StatusBar() {
  const [zoom, setZoom] = useState(12)
  const fill = `${zoom + 5}%`
  return (
    <footer className="flex h-[50px] shrink-0 items-center border-t border-[#dcdcdc] text-[18px] text-black">
      <button aria-label="页面视图" className="ml-[26px]">
        <Ico w={34} h={20} sw={3}><rect x="7.500" y="2.500" width="19" height="15" rx="1" /><path d="M1.5 1v18M32.5 1v18" stroke="#757575" strokeWidth="2.600" /></Ico>
      </button>
      <label className="relative ml-[35px] flex items-center">
        <span className="sr-only">页面</span>
        <select className="w-[158px] appearance-none bg-transparent"><option>页-1</option></select>
        <span className="pointer-events-none absolute right-[2px]"><Caret big /></span>
      </label>
      <div className="h-9 w-px bg-[#d6d6d6]" />
      <button className="ml-10 font-bold">页-1</button>
      <button aria-label="添加页面" className="ml-[54px]"><Ico w={16} h={16} sw={2.8}><path d="M8 1v14M1 8h14" /></Ico></button>

      <div className="ml-auto flex items-center pr-[43px]">
        <span>形状 ID：224</span>
        <button aria-label="播放" className="ml-5">
          <Ico w={26} h={26} sw={2.6}><circle cx="13" cy="13" r="11.500" /><path d="M17.5 7.500v11l-9-5.500z" fill="#757575" stroke="none" transform="translate(26 0) scale(-1 1)" /></Ico>
        </button>
        <button aria-label="缩小" className="ml-4"><Ico w={16} h={16} sw={2.8}><path d="M1 8h14" /></Ico></button>
        <input
          type="range"
          aria-label="缩放"
          value={zoom}
          onChange={e => setZoom(Number(e.target.value))}
          className="ml-[10px] h-[6px] w-[123px] appearance-none rounded-full [&::-webkit-slider-thumb]:size-[18px] [&::-webkit-slider-thumb]:appearance-none [&::-webkit-slider-thumb]:rounded-full [&::-webkit-slider-thumb]:border-3 [&::-webkit-slider-thumb]:border-[#bdbdbd] [&::-webkit-slider-thumb]:bg-white"
          style={{ background: `linear-gradient(to right, #bdbdbd ${fill}, #e0e0e0 ${fill})` }}
        />
        <button aria-label="放大" className="ml-[10px]"><Ico w={16} h={16} sw={2.8}><path d="M8 1v14M1 8h14" /></Ico></button>
        <button className="ml-[22px] flex items-center gap-[14px]">55% <Caret className="text-[#909090]" /></button>
        <button aria-label="全屏" className="ml-[26px]">
          <Ico w={24} h={24} sw={3}><path d="M2 8V2h6M16 2h6v6M22 16v6h-6M8 22H2v-6" /></Ico>
        </button>
        <button aria-label="适合宽度" className="ml-3">
          <Ico w={24} h={24} sw={2.6}><rect x="1.500" y="1.500" width="21" height="21" /><path d="M6 12h12M9 8.500 5.500 12 9 15.500M15 8.500l3.500 3.500-3.500 3.500" strokeWidth="2.200" /></Ico>
        </button>
      </div>
    </footer>
  )
}

// ── Main ──────────────────────────────────────────────────────────────────────
export default function App() {
  return (
    <div className="flex h-screen -scale-x-100 flex-col overflow-hidden bg-[#f4f4f4] font-['Open_Sans','Noto_Sans_CJK_SC',sans-serif]">
      <TitleBar />
      <div className="flex min-h-0 flex-1 flex-col border-x-2 border-t border-b-2 border-[#e0e0e0]">
        <Ribbon />
        <div className="flex min-h-0 flex-1">
          <Workspace />
          <Rail />
          <ThemePanel />
        </div>
        <StatusBar />
      </div>
    </div>
  )
}
